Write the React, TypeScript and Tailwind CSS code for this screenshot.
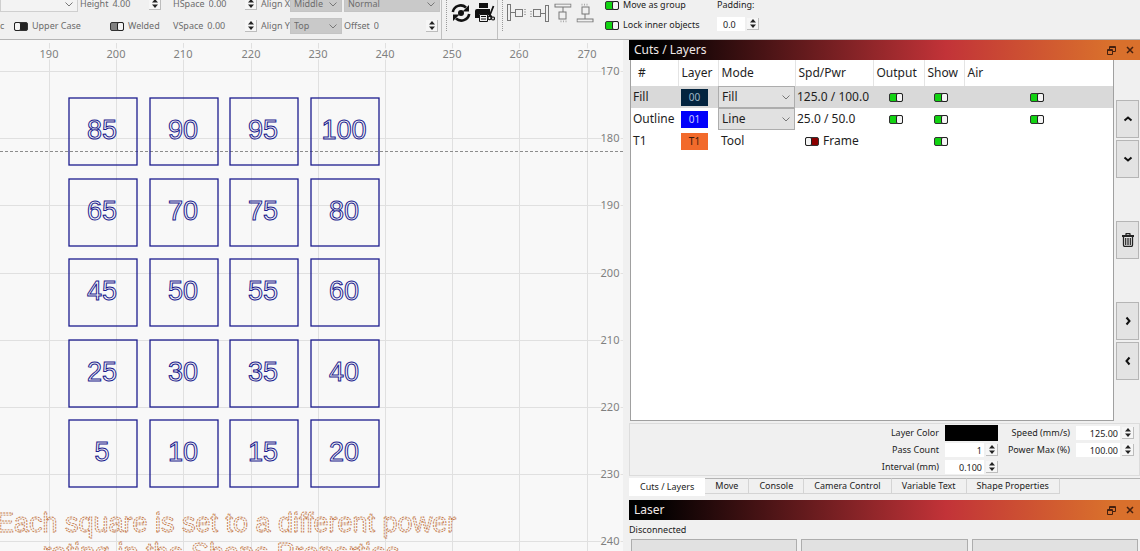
import { useState } from "react";
import type { ReactNode } from "react";

type Layer = {
  name: string;
  tag: string;
  tagClass: string;
  mode: string;
  speed: string;
  tool?: boolean;
};

const layers: Layer[] = [
  { name: "Fill", tag: "00", tagClass: "bg-[#03243f] text-[#9fb6c6]", mode: "Fill", speed: "125.0 / 100.0" },
  { name: "Outline", tag: "01", tagClass: "bg-[#0000fb] text-[#c8c8ff]", mode: "Line", speed: "25.0 / 50.0" },
  { name: "T1", tag: "T1", tagClass: "bg-[#f26a2b] text-[#3c1a0a]", mode: "Tool", speed: "Frame", tool: true },
];

const tabs = ["Cuts / Layers", "Move", "Console", "Camera Control", "Variable Text", "Shape Properties"];

const powerRows = [
  [85, 90, 95, 100],
  [65, 70, 75, 80],
  [45, 50, 55, 60],
  [25, 30, 35, 40],
  [5, 10, 15, 20],
];

const columnTicks = [190, 200, 210, 220, 230, 240, 250, 260, 270];
const rowTicks = [170, 180, 190, 200, 210, 220, 230, 240];

// workspace millimetres to canvas pixels
const toX = (mm: number) => Math.round(49 + (mm - 190) * 6.72);
const toY = (mm: number) => Math.round(31 + (mm - 170) * 6.72);

function Toggle({
  label,
  id,
  on = false,
  tone = "green",
}: {
  label?: string;
  id?: string;
  on?: boolean;
  tone?: "green" | "gray" | "dark" | "red";
}) {
  const [checked, setChecked] = useState(on);
  const tones = {
    green: "bg-[#12d312]",
    gray: "bg-[#808080]",
    dark: "bg-[#222222]",
    red: "bg-[#8b0000]",
  };
  return (
    <input
      type="checkbox"
      id={id}
      aria-label={label}
      checked={checked}
      onChange={(e) => setChecked(e.target.checked)}
      className={`flex h-[9px] w-[14px] shrink-0 appearance-none rounded-[2px] border border-[#333] before:-my-px before:block before:w-[7px] before:rounded-[2px] before:border before:border-[#222] before:bg-[#f4f4f4] before:content-[''] checked:justify-end before:-mx-px ${tones[tone]}`}
    />
  );
}

function Spinner({ label }: { label: string }) {
  return (
    <span className="flex h-3 w-3 shrink-0 flex-col items-center justify-between border-r border-b border-[#bdbdbd] bg-[#f6f6f6] py-px">
      <button aria-label={`${label} up`} className="flex">
        <svg width="6" height="4" viewBox="0 0 6 4">
          <path d="M3 0 6 3.500H0z" fill="#222" />
        </svg>
      </button>
      <button aria-label={`${label} down`} className="flex">
        <svg width="6" height="4" viewBox="0 0 6 4">
          <path d="M3 4 0 .5h6z" fill="#222" />
        </svg>
      </button>
    </span>
  );
}

function ToolbarField({ label, value, className }: { label: string; value: string; className: string }) {
  return (
    <div className={`flex h-full items-center ${className}`}>
      <label className="flex flex-1 items-center gap-1">
        {label}
        <input defaultValue={value} className="w-0 flex-1 bg-transparent" />
      </label>
      <Spinner label={label} />
    </div>
  );
}

function DropDown({ label, value, className }: { label: string; value: string; className: string }) {
  return (
    <div className={`relative flex items-center border ${className}`}>
      <select aria-label={label} defaultValue={value} className="h-full w-full appearance-none bg-transparent px-[3px]">
        <option>{value}</option>
      </select>
      <svg className="pointer-events-none absolute right-1" width="8" height="5" viewBox="0 0 8 5" fill="none">
        <path d="M.5.5 4 4 7.5.5" stroke="#777" />
      </svg>
    </div>
  );
}

function Grip() {
  return <div className="h-9 w-px border-l border-dotted border-[#999]" />;
}

function AlignIcon({ turn }: { turn: string }) {
  return (
    <button aria-label="Align" className={`flex ${turn}`}>
      <svg width="19" height="18" viewBox="0 0 19 18" fill="none" stroke="#777">
        <rect x=".5" y=".5" width="3" height="16" />
        <path d="M3.500 8.500h5" />
        <rect x="8.500" y="5.500" width="7" height="7" />
        <path d="M17 5.500h2M17 8h2M17 10.500h2" stroke="#aaa" />
      </svg>
    </button>
  );
}

function Toolbar() {
  const menu = "border-[#c4c4c4] bg-[#c9c9c9]";
  return (
    <header className="flex h-10 shrink-0 items-end overflow-hidden border-b border-[#b4b4b4] bg-[#f0f0f0] text-[9px] text-[#1c1c1c]">
      <div className="flex h-[46px] w-[441px] shrink-0 flex-col text-[#6c6c6c]">
        <div className="flex h-[22px] items-center">
          <DropDown label="Font" value="" className="mr-0.5 h-4 w-[78px] border-[#cfcfcf] bg-[#f3f3f3]" />
          <ToolbarField label="Height" value="4.00" className="mr-3 w-[81px]" />
          <ToolbarField label="HSpace" value="0.00" className="mr-1 w-[84px]" />
          <span className="w-[29px] whitespace-nowrap">Align X</span>
          <DropDown label="Align X" value="Middle" className={`mr-0.5 h-4 w-[52px] ${menu}`} />
          <DropDown label="Alignment" value="Normal" className={`h-4 w-24 ${menu}`} />
        </div>
        <div className="flex h-[22px] items-center">
          <span className="w-3.5">c</span>
          <Toggle id="upper" tone="dark" />
          <label htmlFor="upper" className="ml-1 w-[78px]">Upper Case</label>
          <Toggle id="welded" on tone="gray" />
          <label htmlFor="welded" className="ml-1 w-[45px]">Welded</label>
          <ToolbarField label="VSpace" value="0.00" className="mr-1 w-[84px]" />
          <span className="w-[29px] whitespace-nowrap">Align Y</span>
          <DropDown label="Align Y" value="Top" className={`mr-0.5 h-4 w-[52px] ${menu}`} />
          <ToolbarField label="Offset" value="0" className="w-[94px]" />
        </div>
      </div>
      <div className="flex h-[52px] w-14 shrink-0 items-center gap-1 border-l border-[#c0c0c0] pl-1">
        <Grip />
        <button aria-label="Rotary">
          <svg width="20" height="20" viewBox="0 0 20 20" fill="none">
            <path d="M1.800 9A8 8 0 0 1 15 4.500M18.200 11A8 8 0 0 1 5 15.500" stroke="#111" strokeWidth="2.600" />
            <path d="M18 2v6.500h-6.500zM2 18v-6.500h6.500z" fill="#111" />
            <circle cx="10" cy="10" r="3" fill="#111" />
          </svg>
        </button>
        <button aria-label="Print and cut">
          <svg width="20" height="20" viewBox="0 0 20 20">
            <path d="M4 0h9v5H4zM2 6h13v6h-2v-1H4v4H0V8a2 2 0 0 1 2-2z" fill="#111" />
            <path d="M4.500 11.500h8v7h-8z" fill="#f0f0f0" stroke="#111" />
            <path d="M6 13.500h5M6 16h5" stroke="#111" />
            <path d="M18.500 3 14.500 13M12 10l5 4" stroke="#111" strokeWidth="1.800" />
            <circle cx="14.500" cy="15" r="1.600" fill="#f0f0f0" stroke="#111" strokeWidth="1.200" />
            <circle cx="18" cy="15.500" r="1.500" fill="#f0f0f0" stroke="#111" strokeWidth="1.200" />
          </svg>
        </button>
      </div>
      <div className="flex h-[52px] shrink-0 items-center gap-1 border-l border-[#c0c0c0] pl-1">
        <Grip />
        <AlignIcon turn="" />
        <AlignIcon turn="rotate-180" />
        <AlignIcon turn="rotate-90" />
        <AlignIcon turn="-rotate-90" />
      </div>
      <div className="ml-2.5 flex h-[46px] w-28 shrink-0 flex-col pt-0.5">
        <div className="flex h-5 items-center gap-1">
          <Toggle id="group" on />
          <label htmlFor="group">Move as group</label>
        </div>
        <div className="flex h-5 items-center gap-1">
          <Toggle id="lock" on />
          <label htmlFor="lock">Lock inner objects</label>
        </div>
      </div>
      <div className="flex h-[46px] flex-col pt-0.5">
        <label htmlFor="padding" className="flex h-5 items-center">Padding:</label>
        <div className="flex h-[18px] items-center gap-0.5">
          <input id="padding" defaultValue="0.0" className="h-3.5 w-7 bg-white px-1.5" />
          <Spinner label="Padding" />
        </div>
      </div>
    </header>
  );
}

function Workspace() {
  return (
    <main className="min-w-0 flex-1 overflow-hidden bg-[#f8f8f8]">
      <svg className="block h-full w-full">
        <g stroke="#e0e0e0" shapeRendering="crispEdges">
          {columnTicks.map((mm) => (
            <line key={mm} x1={toX(mm)} x2={toX(mm)} y1="3" y2="100%" />
          ))}
          {rowTicks.map((mm) => (
            <line key={mm} x1="0" x2="100%" y1={toY(mm)} y2={toY(mm)} />
          ))}
        </g>
        <g className="font-['Noto_Sans',sans-serif] text-[11px]" fill="#808080" stroke="#f8f8f8" strokeWidth="3" paintOrder="stroke" textAnchor="middle">
          {columnTicks.map((mm) => (
            <text key={mm} x={toX(mm)} y="18">{mm}</text>
          ))}
          {rowTicks.map((mm) => (
            <text key={mm} x="610" y={toY(mm) + 4}>{mm}</text>
          ))}
        </g>
        <line x1="0" x2="100%" y1="111.5" y2="111.5" stroke="#8c8c8c" strokeDasharray="3 2" />
        <g className="font-['Liberation_Sans',sans-serif] text-[27px]" fill="none" stroke="#1c1c8e" textAnchor="middle">
          {powerRows.map((row, r) =>
            row.map((power, c) => {
              const x = toX(193 + c * 12);
              const y = toY(174 + r * 12);
              return (
                <g key={power}>
                  <rect x={x} y={y} width="68" height="67" strokeWidth="1.3" />
                  <text x={x + 33} y={y + 41}>{power}</text>
                </g>
              );
            })
          )}
        </g>
        <g className="font-['Liberation_Sans',sans-serif] text-[27px]" fill="none" stroke="#c4784a" strokeWidth=".9" strokeDasharray="2 1" textAnchor="middle">
          <text x="226" y="492">Each square is set to a different power</text>
          <text x="221" y="522">rating in the Shape Properties</text>
        </g>
      </svg>
    </main>
  );
}

function TitleBar({ title }: { title: string }) {
  return (
    <div className="flex h-5 shrink-0 items-center bg-[linear-gradient(90deg,#000_5%,#c23338_62%,#d9702c_94%)] pr-1.5 pl-[5px] text-[12px] text-[#f0e8e8]">
      <h2 className="flex-1">{title}</h2>
      <button aria-label="Float" className="mr-2.5">
        <svg width="9" height="9" viewBox="0 0 9 9" fill="none" stroke="#45200f">
          <path d="M2.500 3V.5h6v5H6M2.500 1.500h6" />
          <path d="M.5 3.500h5v5h-5zM.5 4.500h5" />
        </svg>
      </button>
      <button aria-label="Close">
        <svg width="8" height="8" viewBox="0 0 8 8" stroke="#45200f" strokeWidth="1.500">
          <path d="M1 1l6 6M7 1 1 7" />
        </svg>
      </button>
    </div>
  );
}

function LayerTable() {
  const head = "border-r border-[#e4e4e4] text-left font-normal";
  return (
    <div className="min-w-0 flex-1 border border-t-0 border-[#a0a0a0] bg-white">
      <table className="w-full table-fixed border-collapse text-[12px] text-[#1e1e1e]">
        <thead>
          <tr className="h-[26px]">
            <th className={`w-[47px] pl-[7px] ${head}`}>#</th>
            <th className={`w-10 pl-[3px] ${head}`}>Layer</th>
            <th className={`w-[77px] pl-[3px] ${head}`}>Mode</th>
            <th className={`w-[78px] pl-[3px] ${head}`}>Spd/Pwr</th>
            <th className={`w-[51px] pl-[3px] ${head}`}>Output</th>
            <th className={`w-10 pl-[3px] ${head}`}>Show</th>
            <th className="pl-[3px] text-left font-normal">Air</th>
          </tr>
        </thead>
        <tbody>
          {layers.map((layer, i) => (
            <tr key={layer.tag} className={`h-[22px] ${i === 0 ? "bg-[#d9d9d9]" : ""}`}>
              <td className="pl-0.5">{layer.name}</td>
              <td className="pl-[3px]">
                <span className={`flex h-[17px] w-[27px] items-center justify-center text-[10px] ${layer.tagClass}`}>
                  {layer.tag}
                </span>
              </td>
              <td>
                {layer.tool ? (
                  <span className="pl-[3px]">{layer.mode}</span>
                ) : (
                  <DropDown label={`${layer.name} mode`} value={layer.mode} className="h-[22px] w-[77px] border-[#adadad] bg-[#e1e1e1]" />
                )}
              </td>
              <td className="pl-0.5 whitespace-nowrap">
                {layer.tool ? (
                  <label className="flex items-center gap-1 pl-2">
                    <Toggle tone="red" />
                    {layer.speed}
                  </label>
                ) : (
                  layer.speed
                )}
              </td>
              <td className="pr-1.5">
                {!layer.tool && (
                  <div className="flex justify-center">
                    <Toggle label={`${layer.name} output`} on />
                  </div>
                )}
              </td>
              <td>
                <div className="flex pl-2.5">
                  <Toggle label={`${layer.name} show`} on />
                </div>
              </td>
              <td>
                {!layer.tool && (
                  <div className="flex justify-center pr-1">
                    <Toggle label={`${layer.name} air`} on />
                  </div>
                )}
              </td>
            </tr>
          ))}
        </tbody>
      </table>
    </div>
  );
}

function SideButton({ label, children }: { label: string; children: ReactNode }) {
  return (
    <button
      aria-label={label}
      className="flex h-[38px] w-[23px] items-center justify-center border border-[#b5b5b5] bg-[#e3e3e3]"
    >
      {children}
    </button>
  );
}

function Chevron({ d }: { d: string }) {
  return (
    <svg width="10" height="10" viewBox="0 0 10 10" fill="none" stroke="#111" strokeWidth="2">
      <path d={d} />
    </svg>
  );
}

function SideButtons() {
  return (
    <div className="flex w-6 shrink-0 flex-col pt-10">
      <div className="flex flex-col gap-0.5">
        <SideButton label="Move up"><Chevron d="M1.500 6.500 5 3.500l3.500 3" /></SideButton>
        <SideButton label="Move down"><Chevron d="M1.500 3.500 5 6.500l3.500-3" /></SideButton>
      </div>
      <div className="py-[43px]">
        <SideButton label="Delete">
          <svg width="12" height="14" viewBox="0 0 12 14" fill="none" stroke="#222">
            <path d="M4 2.500V1a.5.5 0 0 1 .5-.5h3A.5.5 0 0 1 8 1v1.500" strokeWidth="1.300" />
            <path d="M0 3h12" strokeWidth="2" />
            <path d="M1.500 4v8a1.500 1.500 0 0 0 1.500 1.500h6a1.500 1.500 0 0 0 1.500-1.500V4" strokeWidth="1.300" />
            <path d="M3.500 5v7M5.200 5v7M6.800 5v7M8.500 5v7" strokeWidth=".9" />
          </svg>
        </SideButton>
      </div>
      <div className="flex flex-col gap-0.5">
        <SideButton label="Next"><Chevron d="M3.500 1.500 6.500 5l-3 3.500" /></SideButton>
        <SideButton label="Previous"><Chevron d="M6.500 1.500 3.500 5l3 3.500" /></SideButton>
      </div>
    </div>
  );
}

function NumberBox({ id, value, label }: { id: string; value: string; label: string }) {
  return (
    <div className="flex items-center gap-0.5">
      <input id={id} defaultValue={value} className="h-3.5 w-0 flex-1 bg-white pr-0.5 text-right" />
      <Spinner label={label} />
    </div>
  );
}

function LayerSettings() {
  return (
    <div className="mt-0.5 grid shrink-0 auto-rows-[16px] grid-cols-[auto_53px_66px_58px] items-center justify-end gap-x-1.5 gap-y-px border border-[#dcdcdc] pt-px pr-[5px] text-right">
      <span>Layer Color</span>
      <button aria-label="Layer color" className="h-4 bg-black" />
      <label htmlFor="speed">Speed (mm/s)</label>
      <NumberBox id="speed" label="Speed" value="125.00" />
      <label htmlFor="passes">Pass Count</label>
      <NumberBox id="passes" label="Pass count" value="1" />
      <label htmlFor="power">Power Max (%)</label>
      <NumberBox id="power" label="Power" value="100.00" />
      <label htmlFor="interval">Interval (mm)</label>
      <NumberBox id="interval" label="Interval" value="0.100" />
    </div>
  );
}

function PanelTabs() {
  const [active, setActive] = useState(tabs[0]);
  return (
    <nav className="mt-0.5 mb-1 flex h-[18px] shrink-0 items-start">
      {tabs.map((tab) => (
        <button
          key={tab}
          onClick={() => setActive(tab)}
          className={
            tab === active
              ? "h-[18px] bg-white px-[11px]"
              : "h-4 border-t border-r border-b border-[#d4d4d4] border-t-[#b4b4b4] px-2.5"
          }
        >
          {tab}
        </button>
      ))}
      <div className="flex-1 border-t border-[#b4b4b4]" />
    </nav>
  );
}

export default function App() {
  return (
    <div className="flex h-screen flex-col overflow-hidden bg-[#f0f0f0] font-['Noto_Sans',sans-serif]">
      <Toolbar />
      <div className="flex min-h-0 flex-1">
        <Workspace />
        <aside className="ml-1.5 flex w-[511px] shrink-0 flex-col text-[9px] text-[#1c1c1c]">
          <TitleBar title="Cuts / Layers" />
          <div className="flex min-h-0 flex-1 gap-0.5 pl-px">
            <LayerTable />
            <SideButtons />
          </div>
          <LayerSettings />
          <PanelTabs />
          <TitleBar title="Laser" />
          <p className="flex h-[19px] shrink-0 items-center">Disconnected</p>
          <div className="grid h-3 shrink-0 grid-cols-3 gap-1 overflow-hidden px-0.5">
            <button aria-label="Pause" className="h-8 border border-[#adadad] bg-[#e1e1e1]" />
            <button aria-label="Stop" className="h-8 border border-[#adadad] bg-[#e1e1e1]" />
            <button aria-label="Start" className="h-8 border border-[#adadad] bg-[#e1e1e1]" />
          </div>
        </aside>
      </div>
    </div>
  );
}
